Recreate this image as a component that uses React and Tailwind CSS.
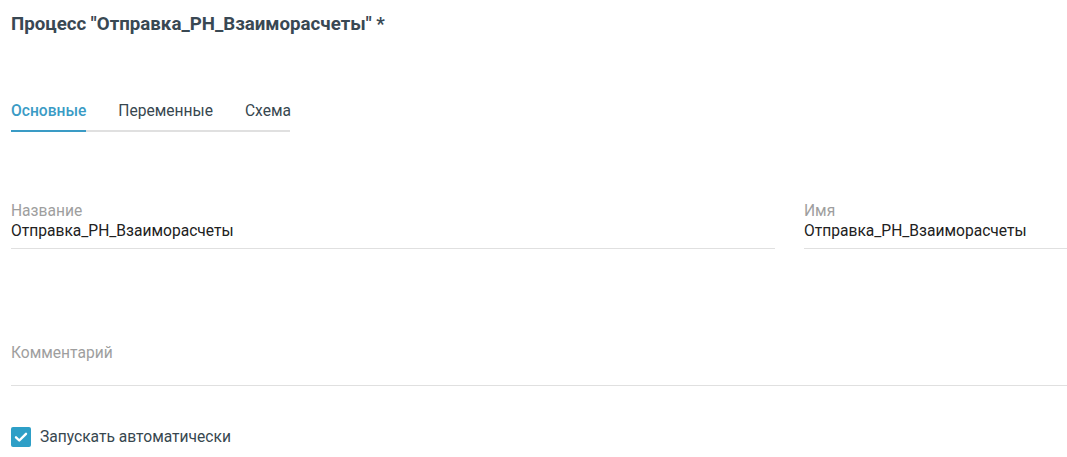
import React from "react";

const font = { fontFamily: "Roboto, 'Noto Sans', sans-serif" };

function Field({ label, value, className = "", valueClass = "min-h-[20px]" }) {
  return (
    <div className={`flex flex-col border-b border-[#e0e0e0] pb-[7px] ${className}`}>
      <span className="text-[15.6px] leading-[20px] text-[#9e9e9e]">{label}</span>
      <span className={`text-[15.6px] leading-[20px] text-[#212121] ${valueClass}`}>{value}</span>
    </div>
  );
}

export default function App() {
  return (
    <div className="w-[1067px] h-[457px] bg-white pl-[11px] overflow-hidden" style={font}>
      <h1 className="pt-[12px] text-[18.7px] leading-[24px] font-bold text-[#394853]">
        Процесс "Отправка_РН_Взаиморасчеты" *
      </h1>

      <div className="mt-[65px] flex w-[279px] gap-[32px] border-b-2 border-[#e0e0e0] text-[15.6px] leading-[20px]">
        <div className="-mb-[2px] border-b-2 border-[#3a9bc5] pb-[9px] font-medium text-[#3a9bc5]">Основные</div>
        <div className="pb-[9px] text-[#37474f]">Переменные</div>
        <div className="pb-[9px] text-[#37474f]">Схема</div>
      </div>

      <div className="mt-[69px] flex gap-[29px]">
        <Field label="Название" value="Отправка_РН_Взаиморасчеты" className="w-[764px]" />
        <Field label="Имя" value="Отправка_РН_Взаиморасчеты" className="flex-1" />
      </div>

      <div className="mt-[94px]">
        <Field label="Комментарий" value="" valueClass="min-h-[15px]" />
      </div>

      <label className="mt-[41px] flex items-center gap-[9px]">
        <span className="flex h-[20px] w-[20px] items-center justify-center rounded-[2px] bg-[#2e9fc7]">
          <svg width="16" height="16" viewBox="0 0 16 16" fill="none">
            <path d="M3 8.3l3.3 3.2L13 4.8" stroke="white" strokeWidth="2.4" strokeLinecap="round" strokeLinejoin="round" />
          </svg>
        </span>
        <span className="text-[15.6px] leading-[20px] text-[#37474f]">Запускать автоматически</span>
      </label>
    </div>
  );
}
